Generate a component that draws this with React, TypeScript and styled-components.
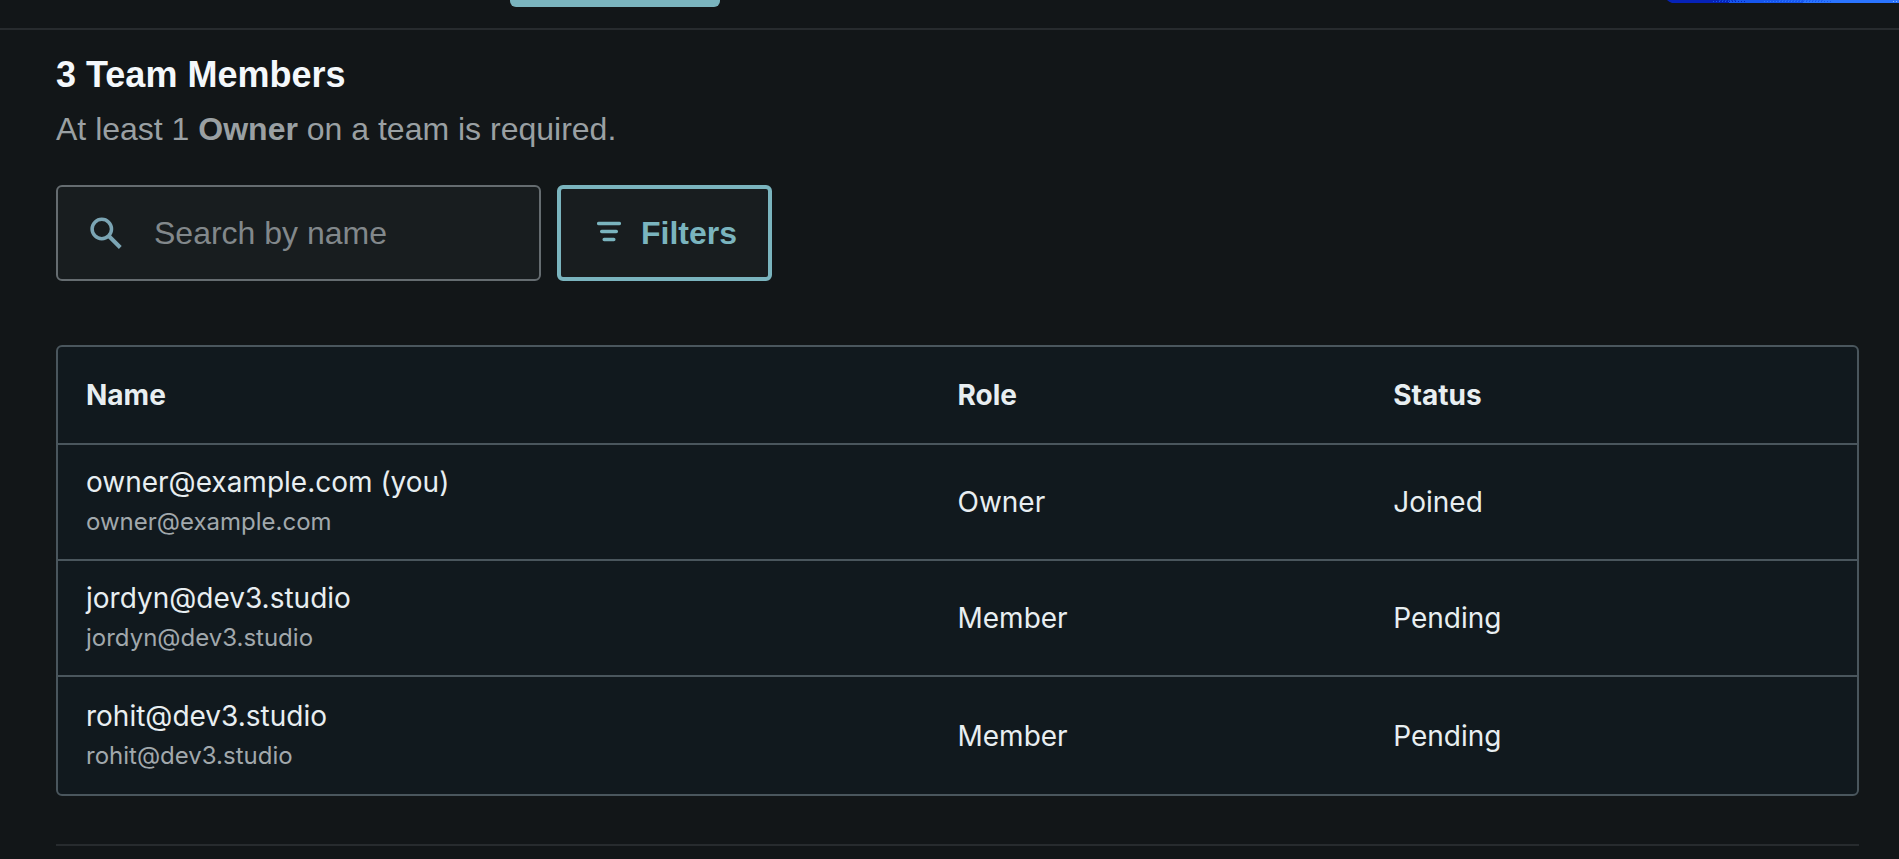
import React from "react";
import styled, { createGlobalStyle } from "styled-components";

const sans = `"Liberation Sans", Arial, sans-serif`;
const inter = `Inter, "Liberation Sans", sans-serif`;

const GlobalStyle = createGlobalStyle`
  * { box-sizing: border-box; }
  body {
    margin: 0;
    background: #121618;
    color: #f4f8fb;
    font-family: ${sans};
  }
`;

const TopBar = styled.header`
  display: flex;
  justify-content: space-between;
  align-items: flex-start;
  height: 30px;
  padding-left: 510px;
  border-bottom: 2px solid #272b2e;
`;

const ActiveTab = styled.div`
  width: 210px;
  height: 7px;
  border-radius: 0 0 6px 6px;
  background: #7ab4be;
`;

const Banner = styled.svg`
  display: block;
  width: 232px;
  height: 3px;
`;

const Content = styled.main`
  padding: 23px 40px 12px 56px;
`;

const Title = styled.h1`
  margin: 0;
  font-size: 36px;
  line-height: 44px;
  font-weight: 700;
`;

const Subtitle = styled.p`
  margin: 12px 0 0;
  font-size: 32px;
  line-height: 40px;
  color: #9aa0a3;
`;

const Toolbar = styled.div`
  display: flex;
  gap: 16px;
  margin-top: 36px;
`;

const SearchBox = styled.label`
  display: flex;
  align-items: center;
  gap: 32px;
  width: 485px;
  height: 96px;
  padding: 0 32px;
  border: 2px solid #656c70;
  border-radius: 6px;
  background: #181d1f;
`;

const SearchInput = styled.input`
  flex: 1;
  min-width: 0;
  height: 40px;
  padding: 0;
  border: 0;
  outline: 0;
  background: transparent;
  color: #f4f8fb;
  font-family: ${sans};
  font-size: 32px;
  &::placeholder {
    color: #82888b;
    opacity: 1;
  }
`;

const FilterButton = styled.button`
  display: flex;
  align-items: center;
  gap: 20px;
  height: 96px;
  padding: 0 31px 0 36px;
  border: 4px solid #7ab4be;
  border-radius: 6px;
  background: #181d1f;
  color: #7ab4be;
  font-family: ${sans};
  font-size: 32px;
  font-weight: 700;
`;

const TableFrame = styled.div`
  margin-top: 64px;
  border: 2px solid #4a565d;
  border-radius: 6px;
  background: #11191e;
  overflow: hidden;
`;

const Table = styled.table`
  display: block;
  width: 100%;
  color: #e8eef1;
  font-family: ${inter};
  font-size: 28px;
  line-height: 36px;
  thead, tbody { display: block; }
`;

const Row = styled.tr`
  display: grid;
  grid-template-columns: 2fr 1fr 1fr;
  align-items: center;
  height: 116px;
  padding: 0 28px;
  border-bottom: 2px solid #4a565d;
  tbody &:last-child {
    height: 117px;
    border-bottom: 0;
  }
`;

const HeadRow = styled(Row)`
  height: 98px;
`;

const HeadCell = styled.th`
  padding: 0;
  text-align: left;
  font-weight: 700;
`;

const Cell = styled.td`
  padding: 0;
`;

const MemberEmail = styled.div`
  margin-top: 4px;
  font-size: 24px;
  line-height: 36px;
  color: #a1a8ac;
`;

const Divider = styled.hr`
  height: 2px;
  margin: 48px 0 0;
  border: 0;
  background: #272b2e;
`;

const members = [
  { name: "owner@example.com (you)", email: "owner@example.com", role: "Owner", status: "Joined" },
  { name: "jordyn@dev3.studio", email: "jordyn@dev3.studio", role: "Member", status: "Pending" },
  { name: "rohit@dev3.studio", email: "rohit@dev3.studio", role: "Member", status: "Pending" },
];

const SearchIcon = () => (
  <svg width="32" height="32" viewBox="0 0 32 32" fill="none" stroke="#7ba5b4" aria-hidden="true">
    <circle cx="11.8" cy="12" r="9.7" strokeWidth="3.5" />
    <path d="M18.8 19 30.3 30.5" strokeWidth="4" />
  </svg>
);

const FilterIcon = () => (
  <svg width="24" height="24" viewBox="0 0 24 24" fill="none" stroke="#7ab4be" strokeWidth="3.5" strokeLinecap="round" aria-hidden="true">
    <path d="M1.7 2.5H22.3M4.7 10.5H19.3M7.2 18.5H16.8" />
  </svg>
);

export default function App() {
  return (
    <>
      <GlobalStyle />
      <TopBar>
        <ActiveTab />
        <Banner viewBox="0 0 232 3" aria-hidden="true">
          <path d="M0 0H63V3H5Q2 2 0 0Z" fill="#0622b8" />
          <path d="M62 0H136V3H62Z" fill="#1656ee" />
          <path d="M136 0H232V3H136Z" fill="#2a74ff" />
          <path d="M46 1.5H62" stroke="#1656ee" strokeDasharray="1 2" />
          <path d="M62 1.5H79" stroke="#0622b8" strokeDasharray="1 2" />
          <path d="M52 .5H70" stroke="#0a3cd0" strokeDasharray="2 1" />
          <path d="M97 1.5H136" stroke="#2a74ff" strokeDasharray="1 2" />
          <path d="M136 1.5H164" stroke="#1656ee" strokeDasharray="1 2" />
          <path d="M112 .5H156" stroke="#2064f7" strokeDasharray="2 1" />
          <path d="M226 1.5H232" stroke="#8fb8ff" strokeDasharray="1 2" />
        </Banner>
      </TopBar>
      <Content>
        <Title>3 Team Members</Title>
        <Subtitle>
          At least 1 <strong>Owner</strong> on a team is required.
        </Subtitle>
        <Toolbar>
          <SearchBox>
            <SearchIcon />
            <SearchInput type="text" placeholder="Search by name" aria-label="Search by name" />
          </SearchBox>
          <FilterButton type="button">
            <FilterIcon />
            Filters
          </FilterButton>
        </Toolbar>
        <TableFrame>
          <Table>
            <thead>
              <HeadRow>
                <HeadCell scope="col">Name</HeadCell>
                <HeadCell scope="col">Role</HeadCell>
                <HeadCell scope="col">Status</HeadCell>
              </HeadRow>
            </thead>
            <tbody>
              {members.map((m) => (
                <Row key={m.email}>
                  <Cell>
                    {m.name}
                    <MemberEmail>{m.email}</MemberEmail>
                  </Cell>
                  <Cell>{m.role}</Cell>
                  <Cell>{m.status}</Cell>
                </Row>
              ))}
            </tbody>
          </Table>
        </TableFrame>
        <Divider />
      </Content>
    </>
  );
}
